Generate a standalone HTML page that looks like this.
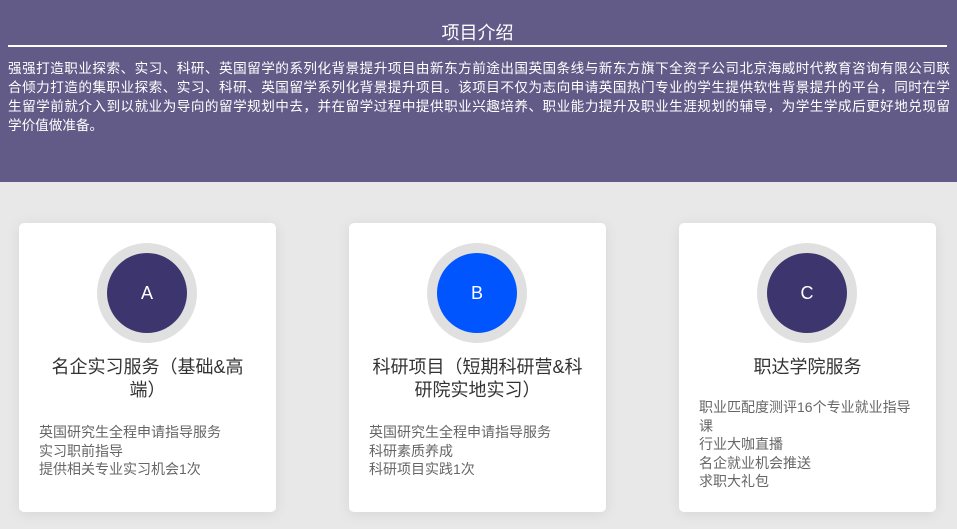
<!DOCTYPE html>
<html><head><meta charset="utf-8"><style>
*{margin:0;padding:0;box-sizing:border-box}
body{width:957px;height:529px;overflow:hidden;background:#e8e8e8;font-family:"Liberation Sans","Noto Sans CJK SC",sans-serif}
.top{position:absolute;left:0;top:0;width:957px;height:182px;background:#625a87;color:#fff}
.top h2{position:absolute;left:8px;top:21px;width:939px;text-align:center;font-size:18px;font-weight:normal;line-height:24px;height:26px;border-bottom:2px solid #fff}
.top .p{position:absolute;left:8px;top:59px;width:942px;font-size:13.6px;line-height:19px}
.top .p div{text-align:justify;text-align-last:justify;white-space:nowrap}
.top .p div.e{text-align-last:left}
.card{position:absolute;top:223px;width:257px;height:289px;background:#fff;border-radius:5px;box-shadow:0 2px 14px rgba(0,0,0,.08)}
.ring{position:absolute;left:78px;top:20px;width:100px;height:100px;border-radius:50%;background:#e0e0e0}
.ring div{position:absolute;left:10px;top:10px;width:80px;height:80px;border-radius:50%;background:#3d356d;color:#fff;font-size:18px;text-align:center;line-height:80px}
.t{position:absolute;left:20px;right:20px;top:133px;text-align:center;font-size:18px;line-height:23px;color:#333}
.l{position:absolute;left:20px;right:20px;font-size:14px;line-height:18.5px;color:#666}
</style></head><body>
<div class="top"><h2>项目介绍</h2><div class="p"><div>强强打造职业探索、实习、科研、英国留学的系列化背景提升项目由新东方前途出国英国条线与新东方旗下全资子公司北京海威时代教育咨询有限公司联</div><div>合倾力打造的集职业探索、实习、科研、英国留学系列化背景提升项目。该项目不仅为志向申请英国热门专业的学生提供软性背景提升的平台，同时在学</div><div>生留学前就介入到以就业为导向的留学规划中去，并在留学过程中提供职业兴趣培养、职业能力提升及职业生涯规划的辅导，为学生学成后更好地兑现留</div><div class="e">学价值做准备。</div></div></div>
<div class="card" style="left:19px"><div class="ring"><div>A</div></div><div class="t">名企实习服务（基础&amp;高端）</div><div class="l" style="top:200px">英国研究生全程申请指导服务<br>实习职前指导<br>提供相关专业实习机会1次</div></div>
<div class="card" style="left:349px"><div class="ring"><div style="background:#0055ff">B</div></div><div class="t">科研项目（短期科研营&amp;科研院实地实习）</div><div class="l" style="top:200px">英国研究生全程申请指导服务<br>科研素质养成<br>科研项目实践1次</div></div>
<div class="card" style="left:679px"><div class="ring"><div>C</div></div><div class="t">职达学院服务</div><div class="l" style="top:175px">职业匹配度测评16个专业就业指导<br>课<br>行业大咖直播<br>名企就业机会推送<br>求职大礼包</div></div>
</body></html>
